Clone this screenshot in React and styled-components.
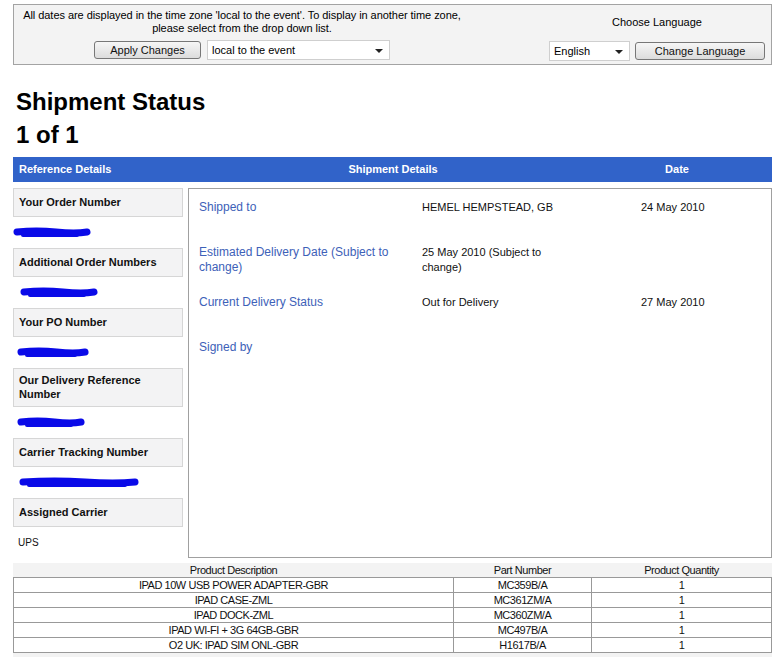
import React from 'react';
import styled, { createGlobalStyle } from 'styled-components';

const GlobalStyle = createGlobalStyle`
  body {
    margin: 0;
    background: #ffffff;
    font-family: "Liberation Sans", Arial, sans-serif;
    color: #000;
  }
`;

const Page = styled.div`
  padding: 4px 7px 0 13px;
`;

/* ---------- time zone / language panel ---------- */

const TopPanel = styled.div`
  display: grid;
  grid-template-columns: 456px 1fr 228px;
  height: 59px;
  border: 1px solid #a3a3a3;
  background: #f3f3f3;
`;

const TzBlock = styled.div`
  display: flex;
  flex-direction: column;
  align-items: center;
  padding-top: 4px;
  font-size: 11px;
  line-height: 13px;
  text-align: center;
  letter-spacing: -0.05px;
`;

const LangBlock = styled.div`
  display: flex;
  flex-direction: column;
  align-items: center;
  padding-top: 11px;
  font-size: 11px;
  line-height: 13px;
`;

const Controls = styled.div`
  display: flex;
  align-items: center;
  gap: ${({ gap }) => gap || 6}px;
  margin-top: ${({ top }) => top || 10}px;
`;

const Button = styled.div`
  box-sizing: border-box;
  width: ${({ w }) => w}px;
  height: 18px;
  border: 1px solid #777;
  border-radius: 3px;
  background: linear-gradient(#f6f6f6, #dcdcdc);
  font-size: 11px;
  line-height: 16px;
  text-align: center;
  letter-spacing: 0;
  color: #111;
`;

const Select = styled.div`
  box-sizing: border-box;
  position: relative;
  width: ${({ w }) => w}px;
  height: 20px;
  border: 1px solid #cfcfcf;
  background: #fff;
  font-size: 11px;
  line-height: 18px;
  text-align: left;
  letter-spacing: 0;
  padding-left: 4px;
  color: #000;

  &::after {
    content: '';
    position: absolute;
    right: 6px;
    top: 8px;
    border-left: 4px solid transparent;
    border-right: 4px solid transparent;
    border-top: 4px solid #222;
  }
`;

/* ---------- headings ---------- */

const Title = styled.h1`
  margin: 20px 0 0 3px;
  font-size: 24px;
  line-height: 33px;
  font-weight: bold;
`;

/* ---------- main section ---------- */

const HeaderBar = styled.div`
  display: grid;
  grid-template-columns: 175px 410px 1fr;
  margin-top: 6px;
  height: 25px;
  background: #3163c9;
  color: #fff;
  font-size: 11px;
  font-weight: bold;
  line-height: 25px;
`;

const HeaderCell = styled.div`
  text-align: ${({ align }) => align || 'center'};
  padding-left: ${({ pl }) => pl || 0}px;
  padding-right: ${({ pr }) => pr || 0}px;
`;

const Body = styled.div`
  display: grid;
  grid-template-columns: 170px 1fr;
  gap: 5px;
  margin-top: 6px;
`;

const RefColumn = styled.div`
  display: flex;
  flex-direction: column;
`;

const RefLabel = styled.div`
  box-sizing: border-box;
  min-height: 29px;
  display: flex;
  align-items: center;
  padding: 4px 5px 5px;
  border: 1px solid #d6d6d6;
  background: #f3f3f4;
  font-size: 11px;
  font-weight: bold;
  line-height: 14px;
  color: #111;
`;

const RefValue = styled.div`
  height: 31px;
  display: flex;
  align-items: center;
  padding-left: ${({ pl }) => (pl === undefined ? 5 : pl)}px;
  font-size: 10px;
  color: #111;
`;

const ShipPanel = styled.div`
  border: 1px solid #a0a0a0;
  padding: 11px 0 0 10px;
`;

const ShipRow = styled.div`
  display: grid;
  grid-template-columns: 223px 219px 1fr;
  min-height: 25px;
  padding-bottom: 20px;
`;

const ShipLabel = styled.div`
  font-size: 12px;
  line-height: 15px;
  color: #3d61b8;
  padding-right: 14px;
`;

const ShipValue = styled.div`
  font-size: 11px;
  line-height: 15px;
  color: #111;
  max-width: 140px;
`;

const ShipDate = styled.div`
  font-size: 11px;
  line-height: 15px;
  color: #111;
`;

/* ---------- products ---------- */

const ProductTable = styled.table`
  width: 759px;
  margin-top: 5px;
  border-collapse: collapse;
  background: #f3f3f3;
  font-size: 11px;
  letter-spacing: -0.45px;
  color: #111;

  th {
    font-weight: normal;
    height: 14px;
    line-height: 13px;
    padding: 0;
  }

  td {
    background: #fff;
    border: 1px solid #999;
    height: 14px;
    line-height: 13px;
    padding: 0;
    text-align: center;
  }
`;

const TableFoot = styled.div`
  width: 759px;
  height: 4px;
  background: #f3f3f3;
`;

const Scribble = ({ width }) => (
  <svg width={width} height="12" viewBox={`0 0 ${width} 12`}>
    <path
      d={`M4 5 Q ${width * 0.3} 3 ${width * 0.55} 5 T ${width - 4} 5`}
      stroke="#0a0ae8"
      strokeWidth="7"
      strokeLinecap="round"
      fill="none"
    />
    <path
      d={`M10 8 L ${width - 14} 8`}
      stroke="#0a0ae8"
      strokeWidth="4"
      strokeLinecap="round"
      fill="none"
    />
  </svg>
);

const refs = [
  { label: 'Your Order Number', scribble: 78, pl: 0 },
  { label: 'Additional Order Numbers', scribble: 78, pl: 7 },
  { label: 'Your PO Number', scribble: 72, pl: 4 },
  { label: 'Our Delivery Reference Number', scribble: 68, pl: 4 },
  { label: 'Carrier Tracking Number', scribble: 120, pl: 6 },
];

const shipments = [
  { label: 'Shipped to', value: 'HEMEL HEMPSTEAD, GB', date: '24 May 2010' },
  {
    label: 'Estimated Delivery Date (Subject to change)',
    value: '25 May 2010 (Subject to change)',
    date: '',
  },
  { label: 'Current Delivery Status', value: 'Out for Delivery', date: '27 May 2010' },
  { label: 'Signed by', value: '', date: '' },
];

const products = [
  ['IPAD 10W USB POWER ADAPTER-GBR', 'MC359B/A', '1'],
  ['IPAD CASE-ZML', 'MC361ZM/A', '1'],
  ['IPAD DOCK-ZML', 'MC360ZM/A', '1'],
  ['IPAD WI-FI + 3G 64GB-GBR', 'MC497B/A', '1'],
  ['O2 UK: IPAD SIM ONL-GBR', 'H1617B/A', '1'],
];

const App = () => (
  <>
    <GlobalStyle />
    <Page>
      <TopPanel>
        <TzBlock>
          <div>
            All dates are displayed in the time zone 'local to the event'. To display in another time zone,
            <br />
            please select from the drop down list.
          </div>
          <Controls top={5}>
            <Button w={107}>Apply Changes</Button>
            <Select w={183}>local to the event</Select>
          </Controls>
        </TzBlock>
        <div />
        <LangBlock>
          <div>Choose Language</div>
          <Controls top={12} gap={5}>
            <Select w={81}>English</Select>
            <Button w={130}>Change Language</Button>
          </Controls>
        </LangBlock>
      </TopPanel>

      <Title>
        Shipment Status
        <br />1 of 1
      </Title>

      <HeaderBar>
        <HeaderCell align="left" pl={6}>
          Reference Details
        </HeaderCell>
        <HeaderCell>Shipment Details</HeaderCell>
        <HeaderCell pr={16}>Date</HeaderCell>
      </HeaderBar>

      <Body>
        <RefColumn>
          {refs.map((r) => (
            <React.Fragment key={r.label}>
              <RefLabel>{r.label}</RefLabel>
              <RefValue pl={r.pl}>
                <Scribble width={r.scribble} />
              </RefValue>
            </React.Fragment>
          ))}
          <RefLabel>Assigned Carrier</RefLabel>
          <RefValue>UPS</RefValue>
        </RefColumn>

        <ShipPanel>
          {shipments.map((s) => (
            <ShipRow key={s.label}>
              <ShipLabel>{s.label}</ShipLabel>
              <ShipValue>{s.value}</ShipValue>
              <ShipDate>{s.date}</ShipDate>
            </ShipRow>
          ))}
        </ShipPanel>
      </Body>

      <ProductTable>
        <colgroup>
          <col style={{ width: 440 }} />
          <col style={{ width: 138 }} />
          <col />
        </colgroup>
        <thead>
          <tr>
            <th>Product Description</th>
            <th>Part Number</th>
            <th>Product Quantity</th>
          </tr>
        </thead>
        <tbody>
          {products.map((p) => (
            <tr key={p[0]}>
              <td>{p[0]}</td>
              <td>{p[1]}</td>
              <td>{p[2]}</td>
            </tr>
          ))}
        </tbody>
      </ProductTable>
      <TableFoot />
    </Page>
  </>
);

export default App;
